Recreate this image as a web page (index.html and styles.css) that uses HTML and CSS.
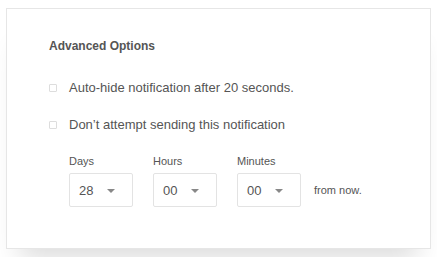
FILE: index.html
```html
<!DOCTYPE html>
<html lang="en">
<head>
  <meta charset="UTF-8" />
  <meta name="viewport" content="width=device-width, initial-scale=1.0" />
  <title>Advanced Options</title>
  <link rel="stylesheet" href="styles.css">
</head>
<body>
  <div class="card">
    <h2>Advanced Options</h2>

    <label class="option"><span class="box"></span> Auto-hide notification after 20 seconds.</label>
    <label class="option"><span class="box"></span> Don’t attempt sending this notification</label>

    <div class="schedule">
      <div class="field">
        <span class="field-label">Days</span>
        <div class="select"><span>28</span><span class="caret"></span></div>
      </div>
      <div class="field">
        <span class="field-label">Hours</span>
        <div class="select"><span>00</span><span class="caret"></span></div>
      </div>
      <div class="field">
        <span class="field-label">Minutes</span>
        <div class="select"><span>00</span><span class="caret"></span></div>
      </div>
      <span class="suffix">from now.</span>
    </div>
  </div>
</body>
</html>
```

FILE: styles.css
```css
body {
  margin: 0;
  padding: 8px 6px;
  background: #fff;
  font-family: 'Liberation Sans', Arial, sans-serif;
  color: #555;
}
.card {
  width: 425px;
  height: 241px;
  box-sizing: border-box;
  padding: 29px 0 0 42px;
  border: 1px solid #e6e6e6;
  background: #fff;
  box-shadow: 0 24px 26px -14px rgba(0, 0, 0, 0.14);
}
h2 {
  margin: 0 0 26px;
  font-size: 12px;
  font-weight: bold;
  color: #555;
  line-height: 16px;
}
.option {
  display: flex;
  align-items: center;
  gap: 12px;
  font-size: 13px;
  line-height: 16px;
  margin-bottom: 21px;
}
.box {
  width: 6px;
  height: 6px;
  border: 1px solid #ddd;
  border-radius: 1px;
}
.schedule {
  display: flex;
  align-items: flex-end;
  gap: 20px;
  padding-left: 20px;
  margin-top: 2px;
}
.field {
  display: flex;
  flex-direction: column;
  gap: 5px;
}
.field-label {
  font-size: 11px;
  line-height: 14px;
}
.select {
  width: 64px;
  height: 34px;
  box-sizing: border-box;
  border: 1px solid #e3e3e3;
  border-radius: 2px;
  display: flex;
  align-items: center;
  justify-content: space-between;
  padding: 0 17px 0 9px;
  font-size: 13px;
}
.caret {
  width: 0;
  height: 0;
  margin-top: 1px;
  border-left: 4.5px solid transparent;
  border-right: 4.5px solid transparent;
  border-top: 4px solid #888;
}
.suffix {
  font-size: 11px;
  height: 34px;
  line-height: 34px;
  margin-left: -7px;
}
```
